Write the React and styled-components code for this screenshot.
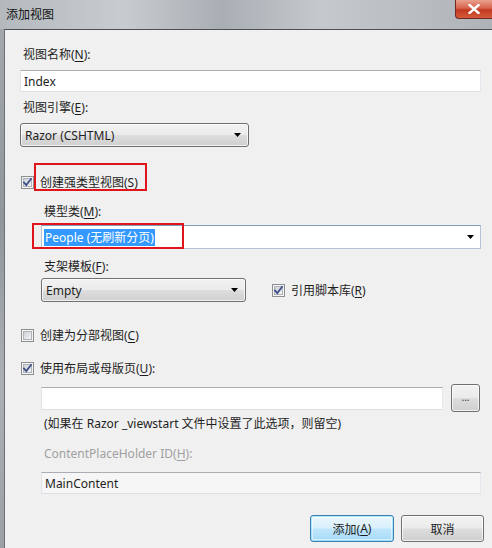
import React from "react";
import styled, { createGlobalStyle, css } from "styled-components";

const Global = createGlobalStyle`
  html, body { margin: 0; padding: 0; }
  body { background: #fff; }
`;

const FONT = `"Segoe UI", "Noto Sans", "Noto Sans CJK SC", sans-serif`;

const Window = styled.div`
  width: 492px;
  height: 548px;
  overflow: hidden;
  display: flex;
  flex-direction: column;
  font-family: ${FONT};
  font-size: 12px;
  color: #000;
  background: linear-gradient(180deg, #a4aab0 0%, #8f969c 40%, #aab0b6 70%, #9aa0a6 100%);
`;

const TitleBar = styled.div`
  height: 29px;
  flex: none;
  display: flex;
  justify-content: space-between;
  align-items: flex-start;
  background: linear-gradient(90deg, #b4b9be 0%, #c8ccd0 25%, #a9aeb4 45%, #c5c9cd 65%, #b9bdc2 85%, #aeb3b8 100%);
`;

const Title = styled.div`
  padding: 7px 0 0 6px;
  line-height: 16px;
  color: #111;
`;

const CloseButton = styled.div`
  width: 37px;
  height: 19px;
  box-sizing: border-box;
  border: 1px solid #6b2a22;
  border-top: none;
  border-right: none;
  border-radius: 0 0 0 4px;
  background: linear-gradient(180deg, #e8a08e 0%, #d7634c 45%, #c0391f 55%, #d65a3b 100%);
  display: flex;
  align-items: center;
  justify-content: center;
`;

const Client = styled.div`
  flex: 1;
  margin-left: 4px;
  border-top: 1px solid #4d4f52;
  border-left: 1px solid #6e7072;
  background: #f0f0f0;
  padding: 17px 11px 0 15px;
  display: flex;
  flex-direction: column;
`;

const Label = styled.div`
  line-height: 16px;
  height: 16px;
  padding-left: 3px;
  margin-top: ${(p) => p.$mt || 0}px;
  color: ${(p) => (p.$disabled ? "#a0a0a0" : "#1e1e1e")};
  white-space: nowrap;
`;

const Key = styled.span`
  text-decoration: underline;
  text-underline-offset: 2px;
`;

const textBox = css`
  box-sizing: border-box;
  border: 1px solid #dbdfe6;
  border-top-color: #abadb3;
  border-left-color: #e2e3ea;
  border-right-color: #e3e9ef;
`;

const TextBox = styled.div`
  ${textBox};
  height: ${(p) => p.$h || 22}px;
  margin-top: ${(p) => p.$mt || 0}px;
  width: ${(p) => (p.$w ? `${p.$w}px` : "auto")};
  background: ${(p) => p.$bg || "#fff"};
  padding-left: 3px;
  display: flex;
  align-items: center;
  color: #1e1e1e;
  flex: ${(p) => (p.$w ? "none" : "initial")};
`;

const Select = styled.div`
  box-sizing: border-box;
  height: 24px;
  width: ${(p) => p.$w}px;
  margin-top: ${(p) => p.$mt || 0}px;
  border: 1px solid #707070;
  border-radius: 3px;
  background: linear-gradient(180deg, #f2f2f2 0%, #ebebeb 48%, #dddddd 52%, #cfcfcf 100%);
  box-shadow: inset 0 0 0 1px rgba(255, 255, 255, 0.7);
  display: flex;
  align-items: center;
  justify-content: space-between;
  padding: 0 7px 0 4px;
  flex: none;
  color: #1e1e1e;
`;

const Arrow = () => (
  <svg width="7" height="4" viewBox="0 0 7 4">
    <path d="M0 0 H7 L3.5 4 Z" fill="#000" />
  </svg>
);

const Combo = styled.div`
  ${textBox};
  height: 24px;
  margin-top: ${(p) => p.$mt || 0}px;
  background: #fff;
  display: flex;
  align-items: center;
  justify-content: space-between;
  padding: 0 6px 0 2px;
  border-color: #b5c4d6;
  border-top-color: #7f9db9;
`;

const Selected = styled.span`
  background: #3399ff;
  color: #fff;
  line-height: 17px;
  padding: 0 1px;
`;

const Indent = styled.div`
  padding-left: 21px;
  display: flex;
  flex-direction: column;
`;

const CheckRow = styled.div`
  position: relative;
  display: flex;
  align-items: center;
  height: 16px;
  margin-top: ${(p) => p.$mt || 0}px;
  margin-left: ${(p) => p.$ml ?? 1}px;
  gap: 6px;
  color: #1e1e1e;
  white-space: nowrap;
`;

const Highlight = styled.div`
  position: absolute;
  border: 2px solid #e0151b;
  box-sizing: border-box;
  pointer-events: none;
  left: ${(p) => p.$l}px;
  top: ${(p) => p.$t}px;
  width: ${(p) => p.$w}px;
  height: ${(p) => p.$h}px;
`;

const Row = styled.div`
  position: relative;
  display: flex;
  align-items: center;
  margin-top: ${(p) => p.$mt || 0}px;
  gap: ${(p) => p.$gap || 0}px;
`;

const SmallButton = styled.div`
  box-sizing: border-box;
  width: 29px;
  height: 28px;
  border: 1px solid #707070;
  border-radius: 3px;
  background: linear-gradient(180deg, #f2f2f2 0%, #ebebeb 48%, #dddddd 52%, #cfcfcf 100%);
  box-shadow: inset 0 0 0 1px rgba(255, 255, 255, 0.7);
  display: flex;
  align-items: center;
  justify-content: center;
  font-size: 10px;
  color: #333;
  padding-bottom: 2px;
`;

const ButtonRow = styled.div`
  display: flex;
  justify-content: flex-end;
  gap: 7px;
  margin-top: 21px;
  margin-right: -3px;
`;

const Button = styled.div`
  box-sizing: border-box;
  width: ${(p) => p.$w}px;
  height: 27px;
  border-radius: 3px;
  display: flex;
  align-items: center;
  justify-content: center;
  color: #1e1e1e;
  ${(p) =>
    p.$default
      ? css`
          border: 1px solid #3c7fb1;
          background: linear-gradient(180deg, #eaf6fd 0%, #d9f0fc 48%, #bee6fd 52%, #a7d9f5 100%);
          box-shadow: inset 0 0 0 1px #48d2fb66, inset 0 0 0 2px rgba(255,255,255,0.5);
        `
      : css`
          border: 1px solid #707070;
          background: linear-gradient(180deg, #f2f2f2 0%, #ebebeb 48%, #dddddd 52%, #cfcfcf 100%);
          box-shadow: inset 0 0 0 1px rgba(255, 255, 255, 0.7);
        `}
`;

const CheckBox = ({ checked }) => (
  <svg width="13" height="13" viewBox="0 0 13 13" style={{ flex: "none" }}>
    <defs>
      <linearGradient id="cbg" x1="0" y1="0" x2="1" y2="1">
        <stop offset="0" stopColor="#cbcfd5" />
        <stop offset="1" stopColor="#f6f6f6" />
      </linearGradient>
    </defs>
    <rect x="0.5" y="0.5" width="12" height="12" fill="#f4f4f4" stroke="#8e8f8f" />
    <rect x="2.5" y="2.5" width="8" height="8" fill="url(#cbg)" stroke="#b0b4ba" strokeWidth="1" />
    {checked && (
      <path d="M3 6.5 L5.3 9 L10 3" fill="none" stroke="#3e4f8a" strokeWidth="1.8" strokeLinecap="square" />
    )}
  </svg>
);

const CloseX = () => (
  <svg width="12" height="10" viewBox="0 0 12 10">
    <path d="M1.5 1 L10.5 9 M10.5 1 L1.5 9" stroke="#fff" strokeWidth="2.4" strokeLinecap="square" />
  </svg>
);

export default function App() {
  return (
    <>
      <Global />
      <Window>
        <TitleBar>
          <Title>添加视图</Title>
          <CloseButton>
            <CloseX />
          </CloseButton>
        </TitleBar>
        <Client>
          <Label>
            视图名称(<Key>N</Key>):
          </Label>
          <TextBox $mt={7}>Index</TextBox>
          <Label $mt={8}>
            视图引擎(<Key>E</Key>):
          </Label>
          <Select $w={229} $mt={7}>
            <span>Razor (CSHTML)</span>
            <Arrow />
          </Select>

          <CheckRow $mt={27}>
            <CheckBox checked />
            <span>
              创建强类型视图(<Key>S</Key>)
            </span>
            <Highlight $l={13} $t={-11} $w={113} $h={28} />
          </CheckRow>

          <Indent>
            <Label $mt={14}>
              模型类(<Key>M</Key>):
            </Label>
            <Row $mt={5}>
              <Combo style={{ flex: 1 }}>
                <Selected>People (无刷新分页)</Selected>
                <Arrow />
              </Combo>
              <Highlight $l={-9} $t={-2} $w={152} $h={26} />
            </Row>
            <Label $mt={10}>
              支架模板(<Key>F</Key>):
            </Label>
            <Row $mt={3} $gap={26}>
              <Select $w={205}>
                <span>Empty</span>
                <Arrow />
              </Select>
              <CheckRow $ml={0}>
                <CheckBox checked />
                <span>
                  引用脚本库(<Key>R</Key>)
                </span>
              </CheckRow>
            </Row>
          </Indent>

          <CheckRow $mt={25}>
            <CheckBox />
            <span>
              创建为分部视图(<Key>C</Key>)
            </span>
          </CheckRow>
          <CheckRow $mt={17}>
            <CheckBox checked />
            <span>
              使用布局或母版页(<Key>U</Key>):
            </span>
          </CheckRow>

          <Indent>
            <Row $mt={8} $gap={8}>
              <TextBox $w={402} $h={23} />
              <SmallButton>...</SmallButton>
            </Row>
            <Label $mt={4}>(如果在 Razor _viewstart 文件中设置了此选项，则留空)</Label>
            <Label $mt={14} $disabled>
              ContentPlaceHolder ID(<Key>H</Key>):
            </Label>
            <TextBox $mt={10} $bg="#f6f6f6">
              MainContent
            </TextBox>
          </Indent>

          <ButtonRow>
            <Button $w={84} $default>
              添加(<Key>A</Key>)
            </Button>
            <Button $w={83}>取消</Button>
          </ButtonRow>
        </Client>
      </Window>
    </>
  );
}
